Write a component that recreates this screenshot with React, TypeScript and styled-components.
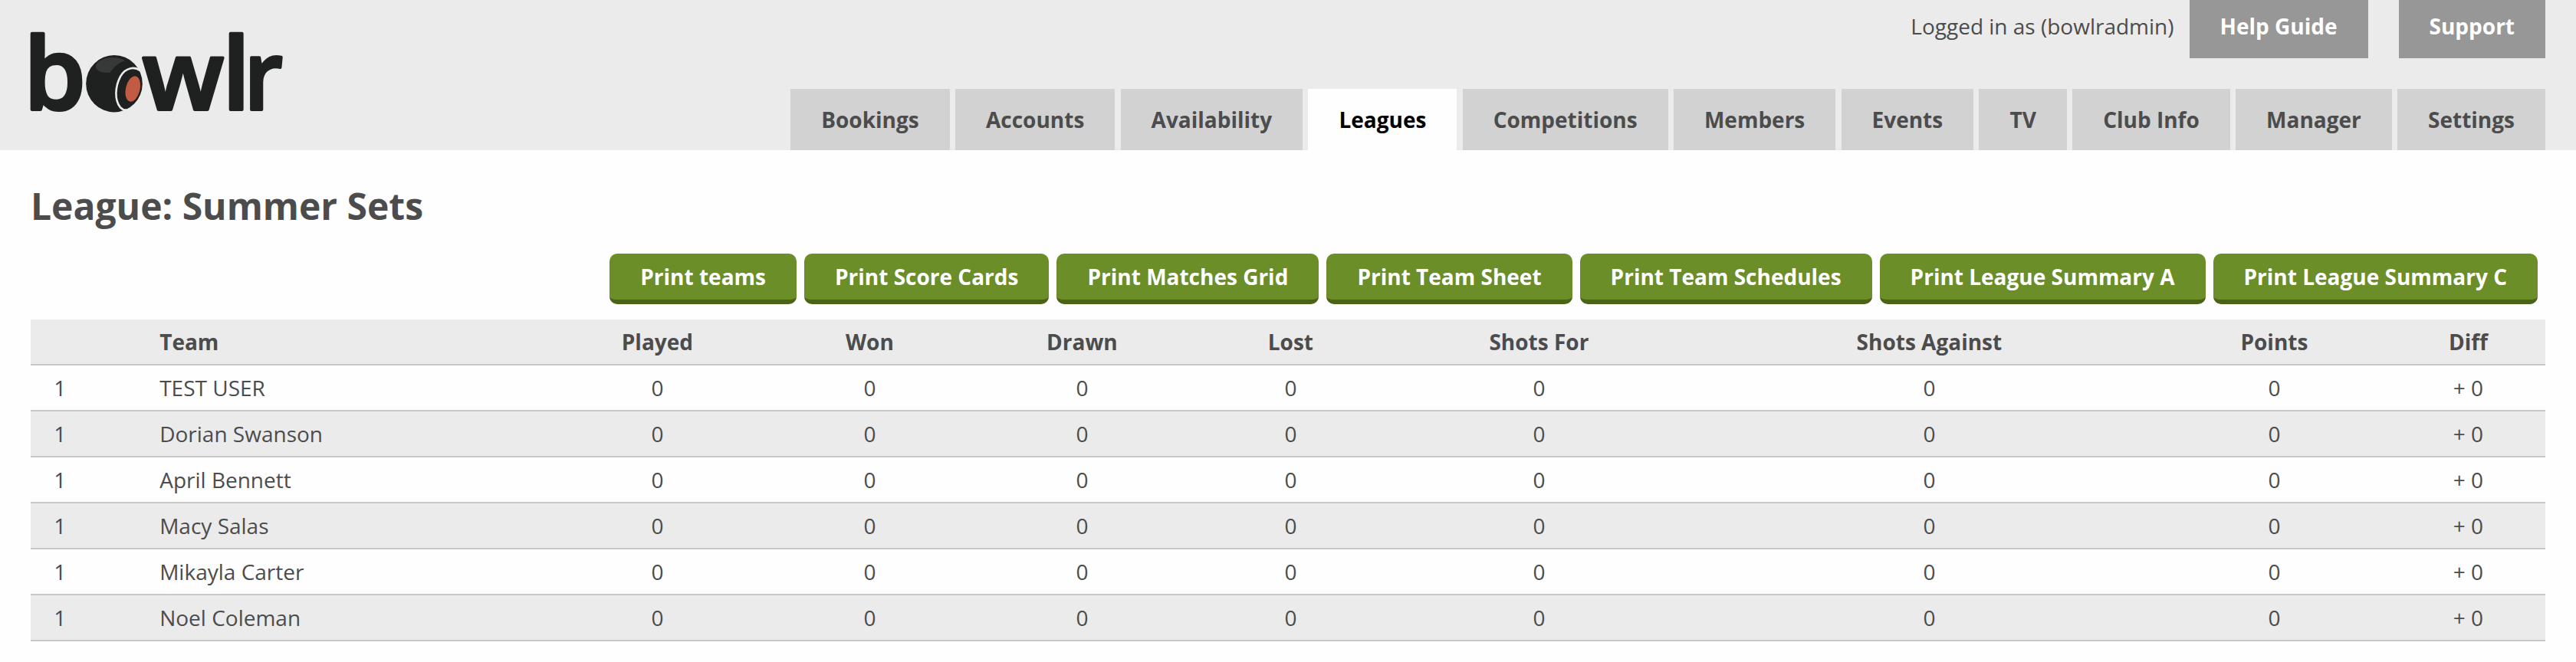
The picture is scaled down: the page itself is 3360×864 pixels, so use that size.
import React from "react";
import styled, { createGlobalStyle } from "styled-components";

const Global = createGlobalStyle`
  *{box-sizing:border-box}
  body{margin:0;background:#fefefe;color:#4c4c4c;font:28px/38px "Open Sans",sans-serif}
`;
const Header = styled.header`
  height:196px;background:#ebebeb;padding:0 40px;display:flex;justify-content:space-between;
`;
const Logo = styled.svg`
  display:block;width:340px;height:120px;margin-top:34px;flex:none;overflow:visible;
  text{
    font-family:"Open Sans",sans-serif;font-weight:600;font-size:130px;
    fill:#1f2120;stroke:#1f2120;stroke-width:4px;stroke-linejoin:round;
  }
`;
const HeaderRight = styled.div`
  display:flex;flex-direction:column;justify-content:space-between;align-items:flex-end;
`;
const Account = styled.div`display:flex;align-items:flex-start;`;
const LoggedIn = styled.span`margin:15px 20px 0 0;`;
const HelpLink = styled.a`
  height:76px;padding:15px 40px 0;background:#979797;color:#fff;font-weight:700;
  & + &{margin-left:40px}
`;
const Nav = styled.nav`display:flex;gap:7.28px;`;
const Tab = styled.a<{ $active?: boolean }>`
  height:80px;padding:21px 40px 0;font-weight:700;
  background:${p => (p.$active ? "#fefefe" : "#d2d2d2")};
  color:${p => (p.$active ? "#000" : "#4c4c4c")};
`;
const Main = styled.main`padding:0 40px;`;
const Title = styled.h1`
  margin:0;padding-top:40px;height:135px;font-size:48px;line-height:66px;font-weight:700;
`;
const Actions = styled.div`
  display:flex;justify-content:flex-end;gap:10px;padding-right:10px;margin-bottom:20px;
`;
const PrintButton = styled.button`
  height:66px;padding:0 40px;border:0;border-bottom:6px solid #4b6318;border-radius:10px;
  background:#6b8e28;color:#fff;font:700 28px/38px "Open Sans",sans-serif;
`;
const Table = styled.table`
  width:3280px;table-layout:fixed;border-collapse:separate;border-spacing:0;
`;
const Row = styled.tr<{ $shaded?: boolean }>`
  background:${p => (p.$shaded ? "#ebebeb" : "#fefefe")};
`;
const Cell = styled.td<{ $left?: boolean }>`
  height:60px;padding:0 0 0 ${p => (p.$left ? 30.2 : 0.8)}px;border-bottom:2px solid #c8c8c8;
  text-align:${p => (p.$left ? "left" : "center")};
`;
const HeadCell = styled(Cell).attrs({ as: "th" })`font-weight:700;`;

const tabs = ["Bookings", "Accounts", "Availability", "Leagues", "Competitions", "Members", "Events", "TV", "Club Info", "Manager", "Settings"];
const prints = ["Print teams", "Print Score Cards", "Print Matches Grid", "Print Team Sheet", "Print Team Schedules", "Print League Summary A", "Print League Summary C"];
const widths = [138, 520, 318, 236, 318, 226, 422, 596, 304, 202];
const stats = ["Played", "Won", "Drawn", "Lost", "Shots For", "Shots Against", "Points", "Diff"];
const teams = ["TEST USER", "Dorian Swanson", "April Bennett", "Macy Salas", "Mikayla Carter", "Noel Coleman"];

const BowlrLogo = () => (
  <Logo viewBox="40 34 340 120" role="img" aria-label="bowlr">
    <text x="31" y="143">b</text>
    <text transform="translate(185.6 143) scale(1.005 .96)">w</text>
    <text x="290" y="143">l</text>
    <text transform="translate(318.3 143) scale(.905 .965)">r</text>
    {/* bowling ball standing in for the "o" */}
    <ellipse cx="149" cy="109.2" rx="36.8" ry="37.2" fill="#1f2120" />
    <path d="M125 87C125 80 136 75 147 75Q157 75 163 79.5C152 83 150 87 143.5 94.5C133 96 125 92 125 87Z" fill="#373938" />
    <path d="M182.5 92C176.5 87 164.5 87 157 99.8C149.6 114 149.6 131 156.6 139.8C159.5 143 162.5 144 165.5 143.5" fill="none" stroke="#ebebeb" strokeWidth="2.6" />
    <ellipse cx="173.3" cy="116" rx="9.2" ry="17" transform="rotate(13 173.3 116)" fill="#c15b43" />
  </Logo>
);

export default function App() {
  return (
    <>
      <Global />
      <Header>
        <BowlrLogo />
        <HeaderRight>
          <Account>
            <LoggedIn>Logged in as (bowlradmin)</LoggedIn>
            <HelpLink>Help Guide</HelpLink>
            <HelpLink>Support</HelpLink>
          </Account>
          <Nav>{tabs.map(t => <Tab key={t} $active={t === "Leagues"}>{t}</Tab>)}</Nav>
        </HeaderRight>
      </Header>
      <Main>
        <Title>League: Summer Sets</Title>
        <Actions>{prints.map(p => <PrintButton key={p}>{p}</PrintButton>)}</Actions>
        <Table>
          <colgroup>{widths.map((w, i) => <col key={i} width={w} />)}</colgroup>
          <thead>
            <Row $shaded>
              <HeadCell />
              <HeadCell $left>Team</HeadCell>
              {stats.map(s => <HeadCell key={s}>{s}</HeadCell>)}
            </Row>
          </thead>
          <tbody>
            {teams.map((team, i) => (
              <Row key={team} $shaded={i % 2 === 1}>
                <Cell $left>1</Cell>
                <Cell $left>{team}</Cell>
                {stats.map(s => <Cell key={s}>{s === "Diff" ? "+ 0" : "0"}</Cell>)}
              </Row>
            ))}
          </tbody>
        </Table>
      </Main>
    </>
  );
}
